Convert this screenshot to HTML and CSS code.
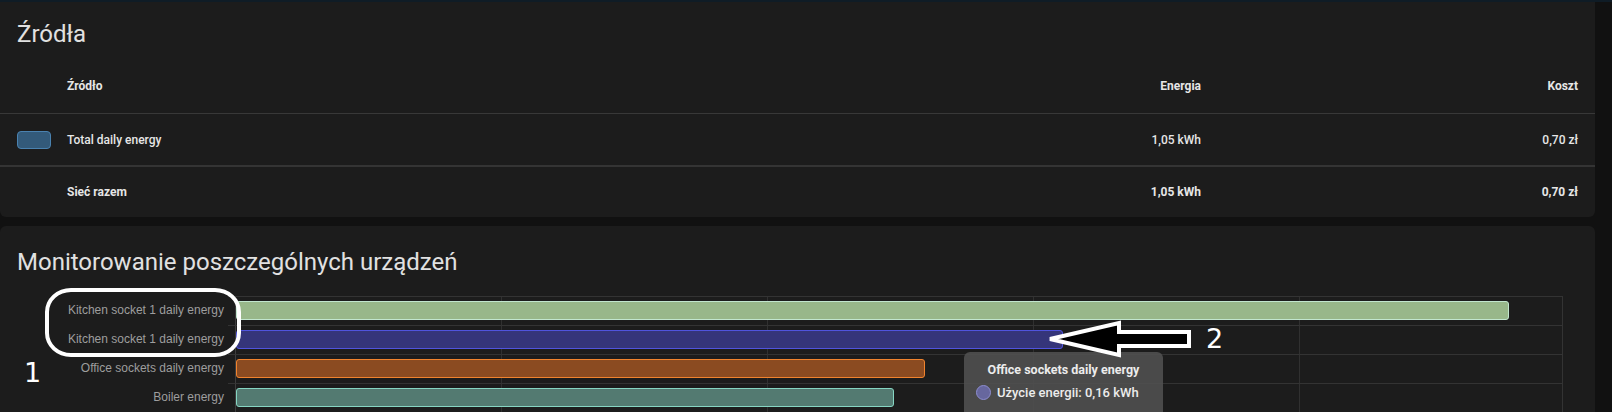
FILE: index.html
```html
<!DOCTYPE html>
<html lang="pl">
<head>
<meta charset="utf-8">
<title>Energia</title>
<link rel="stylesheet" href="styles.css">
</head>
<body>
<div class="topstrip"></div>
<section class="card card-sources">
  <h1 class="card-title">Źródła</h1>
  <div class="table">
    <div class="trow thead">
      <span></span><span class="name">Źródło</span><span class="num">Energia</span><span class="num">Koszt</span>
    </div>
    <div class="trow tbody">
      <span class="swatch"></span><span class="name">Total daily energy</span><span class="num">1,05 kWh</span><span class="num">0,70 zł</span>
    </div>
    <div class="trow tfoot">
      <span></span><span class="name">Sieć razem</span><span class="num">1,05 kWh</span><span class="num">0,70 zł</span>
    </div>
  </div>
</section>
<section class="card card-devices">
  <h1 class="card-title">Monitorowanie poszczególnych urządzeń</h1>
  <div class="chart">
    <div class="crow">
      <span class="clabel">Kitchen socket 1 daily energy</span><span class="ctick"></span>
      <div class="cplot"><div class="bar bar-green" style="width:1273px"></div></div>
    </div>
    <div class="crow">
      <span class="clabel">Kitchen socket 1 daily energy</span><span class="ctick"></span>
      <div class="cplot"><div class="bar bar-purple" style="width:827px"></div></div>
    </div>
    <div class="crow">
      <span class="clabel">Office sockets daily energy</span><span class="ctick"></span>
      <div class="cplot"><div class="bar bar-orange" style="width:689px"></div></div>
    </div>
    <div class="crow">
      <span class="clabel">Boiler energy</span><span class="ctick"></span>
      <div class="cplot"><div class="bar bar-teal" style="width:658px"></div></div>
    </div>
    <div class="crow">
      <span class="clabel"></span><span class="ctick"></span>
      <div class="cplot"></div>
    </div>
  </div>

  <div class="tooltip">
    <div class="tt-title">Office sockets daily energy</div>
    <div class="tt-body"><span class="tt-dot"></span><span>Użycie energii: 0,16 kWh</span></div>
  </div>

  <div class="note-oval"></div>
  <div class="note-num note-one">1</div>
  <svg class="note-arrow" width="155" height="42" viewBox="0 0 155 42">
    <polygon points="10,21 79,5 79,14 149,14 149,28 79,28 79,37" fill="#000" stroke="#fff" stroke-width="4" stroke-linejoin="miter"/>
  </svg>
  <div class="note-num note-two">2</div>
</section>
</body>
</html>
```
FILE: styles.css
```css
html, body {
  margin: 0;
  padding: 0;
}
body {
  background: #111111;
  height: 412px;
  overflow: hidden;
  font-family: Roboto, "Noto Sans", sans-serif;
  color: #e1e1e1;
}
.topstrip {
  height: 2px;
  background: #0f1c26;
}
.card {
  width: 1595px;
  background: #1c1c1c;
  border-radius: 6px;
  box-sizing: border-box;
}
.card-sources {
  border-radius: 0 0 6px 6px;
  height: 215px;
}
.card-devices {
  position: relative;
  margin-top: 9px;
  height: 300px;
  padding-top: 20px;
}
.card-title {
  margin: 0;
  padding: 0 17px;
  font-size: 24px;
  line-height: 32px;
  font-weight: 400;
  color: #e1e1e1;
}
.card-sources .card-title {
  padding-top: 16px;
  margin-bottom: 8px;
}
.card-devices .card-title {
  margin-bottom: 18px;
}

/* table */
.trow {
  display: grid;
  grid-template-columns: 50px 1fr 150px 377px;
  align-items: center;
  padding: 0 17px;
  font-size: 12px;
  font-weight: 500;
  color: #e6e6e6;
}
.thead {
  height: 56px;
  border-bottom: 1px solid #383838;
  box-sizing: border-box;
  font-weight: 700;
}
.tbody {
  height: 53px;
  border-bottom: 2px solid #343434;
  box-sizing: border-box;
}
.tfoot {
  height: 50px;
  font-weight: 700;
}
.num {
  text-align: right;
}
.swatch {
  width: 34px;
  height: 18px;
  box-sizing: border-box;
  border: 1px solid #4a82b0;
  background: #335a7a;
  border-radius: 4px;
}

/* chart */
.chart {
  display: flex;
  flex-direction: column;
}
.crow {
  display: grid;
  grid-template-columns: 228px 7px 1328px;
  height: 29px;
}
.clabel {
  font-family: "Liberation Sans", Arial, sans-serif;
  font-size: 12px;
  line-height: 29px;
  color: #9e9e9e;
  text-align: right;
  padding-right: 4px;
  white-space: nowrap;
}
.ctick {
  border-top: 1px solid #333333;
}
.cplot {
  box-sizing: border-box;
  border-top: 1px solid #333333;
  border-left: 1px solid #3d3d3d;
  border-right: 1px solid #333333;
  background-image: repeating-linear-gradient(to right, transparent 0, transparent 265px, #303030 265px, #303030 266px);
}
.bar {
  box-sizing: border-box;
  height: 19px;
  margin-top: 4px;
  border-radius: 3px;
  border: 1.5px solid;
}
.bar-green { background: #98b78a; border-color: #c2e6cf; }
.bar-purple { background: #35357a; border-color: #5054de; }
.bar-orange { background: #8b4b21; border-color: #f0832e; }
.bar-teal { background: #537a71; border-color: #86d6c3; }

/* tooltip */
.tooltip {
  position: absolute;
  left: 964px;
  top: 126px;
  width: 199px;
  height: 80px;
  box-sizing: border-box;
  padding: 10px 12px;
  background: rgba(80, 80, 80, 0.9);
  border-radius: 6px;
}
.tt-title {
  font-size: 12.5px;
  line-height: 16px;
  font-weight: 700;
  color: #ececec;
  text-align: center;
}
.tt-body {
  display: flex;
  align-items: center;
  gap: 6px;
  margin-top: 6px;
  height: 16px;
  font-size: 13px;
  font-weight: 500;
  color: #ececec;
}
.tt-dot {
  width: 15px;
  height: 15px;
  box-sizing: border-box;
  border-radius: 50%;
  background: #67679e;
  border: 1px solid #8d8dd0;
}

/* annotations */
.note-oval {
  position: absolute;
  left: 45px;
  top: 62px;
  width: 196px;
  height: 69px;
  box-sizing: border-box;
  border: 4px solid #ffffff;
  border-radius: 26px / 24px;
}
.note-num {
  position: absolute;
  font-family: "DejaVu Sans", sans-serif;
  font-size: 27px;
  line-height: 27px;
  color: #ffffff;
}
.note-one {
  left: 24px;
  top: 133px;
}
.note-two {
  left: 1206px;
  top: 99px;
}
.note-arrow {
  position: absolute;
  left: 1040px;
  top: 92px;
}
```
